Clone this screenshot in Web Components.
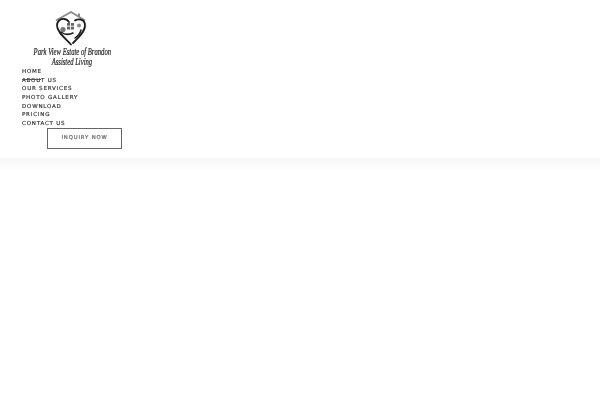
<!DOCTYPE html>
<html>
<head>
<meta charset="utf-8">
<title>Park View Estate of Brandon</title>
<style>
  html, body { margin: 0; background: #fff; }
  body { font-family: "DejaVu Sans", "Liberation Sans", sans-serif; }
</style>
</head>
<body>
<site-header>
  <site-logo></site-logo>
  <nav-item>Home</nav-item>
  <nav-item active>About Us</nav-item>
  <nav-item>Our Services</nav-item>
  <nav-item>Photo Gallery</nav-item>
  <nav-item>Download</nav-item>
  <nav-item>Pricing</nav-item>
  <nav-item>Contact Us</nav-item>
  <inquiry-button>Inquiry Now</inquiry-button>
</site-header>

<script>
// Outer header bar, and a strip under it for the soft shadow
class SiteHeader extends HTMLElement {
  constructor() {
    super();
    this.attachShadow({mode: 'open'});
    this.shadowRoot.innerHTML = `
      <style>
        :host { display: block; }
        .bar {
          display: flex;
          flex-direction: column;
          align-items: flex-start;
          box-sizing: border-box;
          height: 158px;
          padding: 11px 0 0 22px;
          background: #fff;
        }
        .fade {
          height: 14px;
          background: linear-gradient(#f7f7f7, #fff);
        }
      </style>
      <div class="bar"><slot></slot></div>
      <div class="fade"></div>
    `;
  }
}

// Logo: house roof + heart mark with the two lines of script under it
class SiteLogo extends HTMLElement {
  constructor() {
    super();
    this.attachShadow({mode: 'open'});
    this.shadowRoot.innerHTML = `
      <style>
        :host {
          display: flex;
          flex-direction: column;
          align-items: center;
          width: 78px;
          margin: 0 0 0 11px;
          height: 56px;
          color: #222;
          font: italic 9.5px/9.5px "Liberation Serif", serif;
          white-space: nowrap;
          filter: grayscale(1);
        }
        svg { display: block; margin-left: -2px; }
        .line { display: block; transform: scaleX(0.7); transform-origin: center; flex: none; -webkit-text-stroke: 0.2px #222; }
        .one { margin-top: 2px; }
      </style>
      <svg width="34" height="35" viewBox="0 0 34 35" fill="none">
        <path d="M2 9.5 L17 1 L31 9.5" stroke="#8a8a8a" stroke-width="1.8"/>
        <path d="M25 2.5 V6" stroke="#8a8a8a" stroke-width="2"/>
        <path d="M17 33.5 C11 27 3 21 3 14.5 C3 9.5 7 7.5 10.5 8 C13 8.4 14 9.5 15 11 M21 9.5 C24 7.5 31 7.5 31 14.5 C31 21 24 27 19 32" stroke="#1c1c1c" stroke-width="1.8" stroke-linecap="round"/>
        <path d="M7 21 C11 24 15 24 19 22 M27 19 C26 23 24 25 21 27" stroke="#1c1c1c" stroke-width="1.5" stroke-linecap="round"/>
        <circle cx="9" cy="18.5" r="2.6" fill="#777"/>
        <circle cx="25" cy="14.5" r="2" fill="#888"/>
        <rect x="13" y="12" width="7" height="6.5" fill="#666"/>
        <path d="M16.5 12 V18.5 M13 15.2 H20" stroke="#eee" stroke-width="1"/>
      </svg>
      <span class="line one">Park View Estate of Brandon</span>
      <span class="line">Assisted Living</span>
    `;
  }
}

// One menu row. The active one has the short bar running over its text
class NavItem extends HTMLElement {
  constructor() {
    super();
    this.attachShadow({mode: 'open'});
    this.shadowRoot.innerHTML = `
      <style>
        :host {
          display: block;
          position: relative;
          height: 8.67px;
          font: 400 5.5px/8.67px "DejaVu Sans", "Liberation Sans", sans-serif;
          letter-spacing: 0.8px;
          text-transform: uppercase;
          color: #3a3a3a;
          -webkit-text-stroke: 0.2px #3a3a3a;
          white-space: nowrap;
          filter: grayscale(1);
        }
        :host([active])::after {
          content: "";
          position: absolute;
          left: 0;
          top: 3.5px;
          width: 19px;
          height: 1px;
          background: #555;
        }
      </style>
      <slot></slot>
    `;
  }
}

class InquiryButton extends HTMLElement {
  constructor() {
    super();
    this.attachShadow({mode: 'open'});
    this.shadowRoot.innerHTML = `
      <style>
        :host {
          display: flex;
          align-items: center;
          justify-content: center;
          box-sizing: border-box;
          width: 75px;
          height: 21px;
          margin: 0 0 0 25px;
          border: 1px solid #666;
          font: 400 5.3px/1 "DejaVu Sans", "Liberation Sans", sans-serif;
          letter-spacing: 0.85px;
          text-transform: uppercase;
          color: #666;
          -webkit-text-stroke: 0.2px #666;
          white-space: nowrap;
          filter: grayscale(1);
        }
      </style>
      <slot></slot>
    `;
  }
}

customElements.define('site-header', SiteHeader);
customElements.define('site-logo', SiteLogo);
customElements.define('nav-item', NavItem);
customElements.define('inquiry-button', InquiryButton);
</script>
</body>
</html>
